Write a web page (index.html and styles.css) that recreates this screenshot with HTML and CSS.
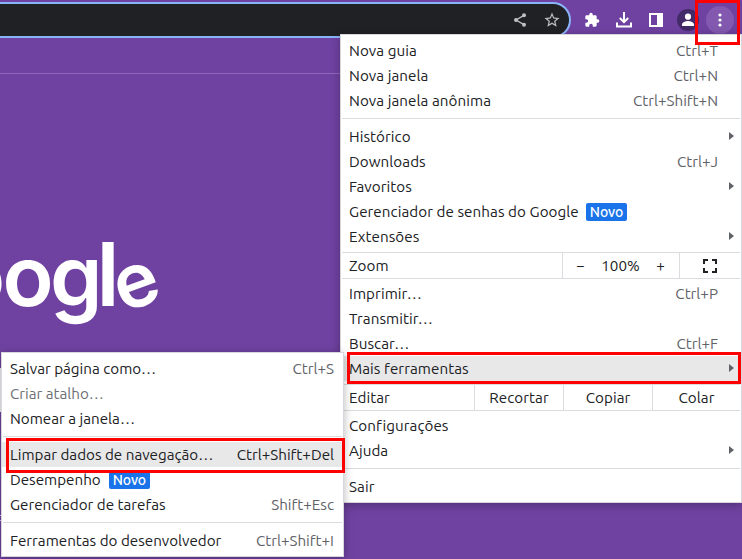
FILE: index.html
```
<!DOCTYPE html>
<html lang="pt-BR">
<head>
<meta charset="utf-8">
<title>Nova guia</title>
<link rel="stylesheet" href="styles.css">
</head>
<body>
<div class="window">
  <header class="toolbar">
    <div class="omnibox">
      <svg class="icon share" viewBox="0 0 24 24"><path d="M18 5 6 12l12 7" fill="none" stroke="currentColor" stroke-width="2"/><circle cx="18" cy="5" r="3"/><circle cx="6" cy="12" r="3"/><circle cx="18" cy="19" r="3"/></svg>
      <svg class="icon star" viewBox="0 0 24 24"><path d="M22 9.24l-7.19-.62L12 2 9.19 8.63 2 9.24l5.46 4.73L5.82 21 12 17.27 18.18 21l-1.63-7.03L22 9.24zM12 15.4l-3.76 2.27 1-4.28-3.32-2.88 4.38-.38L12 6.1l1.71 4.04 4.38.38-3.32 2.88 1 4.28L12 15.4z"/></svg>
    </div>
    <div class="actions">
      <svg class="icon puzzle" viewBox="0 0 24 24"><path d="M20.5 11H19V7c0-1.1-.9-2-2-2h-4V3.500a2.500 2.500 0 0 0-5 0V5H4c-1.100 0-2 .9-2 2v3.800h1.500a2.700 2.700 0 0 1 0 5.400H2V20c0 1.100.9 2 2 2h3.800v-1.500a2.700 2.700 0 0 1 5.400 0V22H17c1.100 0 2-.9 2-2v-4h1.500a2.500 2.500 0 0 0 0-5z"/></svg>
      <svg class="icon download" viewBox="0 0 18 18" fill="none" stroke="currentColor" stroke-width="2"><path d="M9 1v9.500M4.800 7 9 11.200 13.200 7M2 11.500V15.500h14V11.500"/></svg>
      <svg class="icon panel" viewBox="0 0 16 16"><path d="M1 1h14v14H1zM3 3v10h6V3z" fill-rule="evenodd"/></svg>
      <svg class="avatar" viewBox="0 0 22 22"><circle class="disc" cx="11" cy="11" r="11"/><circle cx="11" cy="7.700" r="3.100"/><path d="M5 17v-1.500c0-2.400 3.600-3.600 6-3.600s6 1.200 6 3.600V17z"/></svg>
      <svg class="more" viewBox="0 0 28 28"><circle class="halo" cx="14" cy="14" r="14"/><circle cx="14" cy="9" r="1.600"/><circle cx="14" cy="14" r="1.600"/><circle cx="14" cy="19" r="1.600"/></svg>
    </div>
  </header>
  <div class="bookmarks"></div>
  <main class="page">
    <svg class="logo" viewBox="0 0 170 110"><text y="76" x="-46 2.500 50">oog<tspan class="tall" x="96.500">l</tspan><tspan class="tilted" x="123" y="83" rotate="-20">e</tspan></text></svg>
    <div class="searchbox"></div>
    <div class="shortcut"></div>
  </main>

  <nav class="menu main-menu">
    <div class="row"><span>Nova guia</span><kbd>Ctrl+T</kbd></div>
    <div class="row"><span>Nova janela</span><kbd>Ctrl+N</kbd></div>
    <div class="row"><span>Nova janela anônima</span><kbd>Ctrl+Shift+N</kbd></div>
    <hr>
    <div class="row"><span>Histórico</span><i class="arrow"></i></div>
    <div class="row"><span>Downloads</span><kbd>Ctrl+J</kbd></div>
    <div class="row"><span>Favoritos</span><i class="arrow"></i></div>
    <div class="row"><span>Gerenciador de senhas do Google</span><b class="badge">Novo</b></div>
    <div class="row"><span>Extensões</span><i class="arrow"></i></div>
    <div class="strip zoom">
      <span class="label">Zoom</span>
      <div class="stepper"><span>−</span><span>100%</span><span>+</span></div>
      <div class="full"><svg viewBox="0 0 14 14" fill="none" stroke="currentColor" stroke-width="2"><path d="M1 5V1h4M9 1h4v4M13 9v4H9M5 13H1V9"/></svg></div>
    </div>
    <div class="row"><span>Imprimir…</span><kbd>Ctrl+P</kbd></div>
    <div class="row"><span>Transmitir…</span></div>
    <div class="row"><span>Buscar…</span><kbd>Ctrl+F</kbd></div>
    <div class="row active"><span>Mais ferramentas</span><i class="arrow"></i></div>
    <div class="strip edit">
      <span class="label">Editar</span>
      <span class="cell">Recortar</span><span class="cell">Copiar</span><span class="cell">Colar</span>
    </div>
    <div class="row"><span>Configurações</span></div>
    <div class="row"><span>Ajuda</span><i class="arrow"></i></div>
    <hr>
    <div class="row"><span>Sair</span></div>
  </nav>

  <nav class="menu sub-menu">
    <div class="row"><span>Salvar página como…</span><kbd>Ctrl+S</kbd></div>
    <div class="row disabled"><span>Criar atalho…</span></div>
    <div class="row"><span>Nomear a janela…</span></div>
    <hr>
    <div class="row active"><span>Limpar dados de navegação…</span><kbd>Ctrl+Shift+Del</kbd></div>
    <div class="row"><span>Desempenho</span><b class="badge">Novo</b></div>
    <div class="row"><span>Gerenciador de tarefas</span><kbd>Shift+Esc</kbd></div>
    <hr>
    <div class="row"><span>Ferramentas do desenvolvedor</span><kbd>Ctrl+Shift+I</kbd></div>
  </nav>

  <div class="mark mark-button"></div>
  <div class="mark mark-tools"></div>
  <div class="mark mark-clear"></div>
</div>
</body>
</html>
```
FILE: styles.css
```
* { box-sizing: border-box; }
body {
  margin: 0;
  font-family: "Ubuntu", "Noto Sans", sans-serif;
  font-size: 15.2px;
  letter-spacing: .06px;
  font-variant-ligatures: none;
  color: #202124;
}
.window {
  position: relative;
  width: 742px;
  height: 559px;
  overflow: hidden;
  background: #6f42a1;
}
.toolbar { display: flex; height: 40px; padding-top: 2px; }
.omnibox {
  flex: none;
  width: 571px;
  height: 36px;
  display: flex;
  align-items: center;
  justify-content: flex-end;
  gap: 15px;
  padding-right: 8px;
  background: #202124;
  border: 2px solid #8ab4f8;
  border-left: 0;
  border-radius: 0 18px 18px 0;
  color: #bdc1c6;
}
.icon { width: 16px; height: 16px; fill: currentColor; flex: none; }
.icon.star { width: 18px; height: 18px; }
.icon.download { fill: none; width: 18px; height: 18px; }
.actions {
  display: flex;
  align-items: center;
  height: 36px;
  color: #fff;
  padding-left: 13px;
  fill: #fff;
}
.puzzle { margin-right: 15px; }
.download { margin-right: 15px; }
.panel { margin-right: 13px; }
.avatar { width: 22px; height: 22px; margin-right: 7px; }
.avatar .disc { fill: #432a68; }
.more { width: 28px; height: 28px; }
.more .halo { fill: #8259af; }
.bookmarks { height: 34px; border-bottom: 1px solid #9166bd; }
.page { padding-top: 156px; }
.logo { display: block; width: 170px; height: 110px; overflow: hidden; }
.logo text { font: 600 84px Inter, sans-serif; fill: #fff; }
.logo .tall { font-size: 88px; }
.logo .tilted { font-size: 75px; }
.searchbox { width: 40px; height: 44px; margin-top: 28px; background: #f0f0f0; }
.shortcut { width: 40px; height: 6px; margin-top: 103px; border: solid #d3c4e4; border-width: 1px 0; }

.menu {
  position: absolute;
  background: #fff;
  border: 1px solid #d6d7dc;
  box-shadow: 0 2px 9px rgba(0, 0, 0, .28);
  padding: 3px 0;
}
.main-menu { left: 340px; top: 34px; width: 402px; height: 469px; }
.sub-menu { left: 1px; top: 352px; width: 343px; height: 205px; letter-spacing: 0; }
.row {
  display: flex;
  align-items: center;
  height: 25px;
  padding: 0 23px 0 8px;
  line-height: 25px;
  white-space: nowrap;
}
.sub-menu .row { padding-right: 9px; }
.row.active { background: #e8e8e9; }
.row.disabled { color: #6d7075; }
kbd { margin-left: auto; font: inherit; letter-spacing: 0; color: #5f6368; }
.active kbd { color: #202124; }
.arrow {
  margin: -2px -16px 0 auto;
  border: solid transparent;
  border-width: 4px 0 4px 5px;
  border-left-color: #5f6368;
}
.badge {
  margin-left: 7px;
  height: 18px;
  padding: 0 4px;
  border-radius: 2px;
  background: #1a73e8;
  color: #fff;
  font-size: 14px;
  font-weight: 500;
  line-height: 18px;
  letter-spacing: -.1px;
}
.sub-menu .badge { margin-left: 8px; }
hr { margin: 5px 1px; height: 1px; border: 0; background: #dadce0; }
.strip {
  display: flex;
  height: 27px;
  margin: 3px 1px 2px;
  border: solid #dadce0;
  border-width: 1px 0;
  line-height: 26px;
}
.label { flex: 1; padding-left: 7px; }
.stepper {
  width: 117px;
  display: flex;
  justify-content: space-between;
  padding: 0 14px 0 13px;
  border-left: 1px solid #dadce0;
}
.full {
  width: 61px;
  display: flex;
  align-items: center;
  justify-content: center;
  border-left: 1px solid #dadce0;
}
.full svg { width: 14px; height: 14px; }
.cell { width: 89px; border-left: 1px solid #dadce0; text-align: center; }
.cell:last-child { width: 88px; }

.mark { position: absolute; border: 3px solid #f00; }
.mark-button { left: 695px; top: 0; width: 45px; height: 45px; }
.mark-tools { left: 347px; top: 352px; width: 394px; height: 32px; }
.mark-clear { left: 6px; top: 438px; width: 339px; height: 35px; }
```
